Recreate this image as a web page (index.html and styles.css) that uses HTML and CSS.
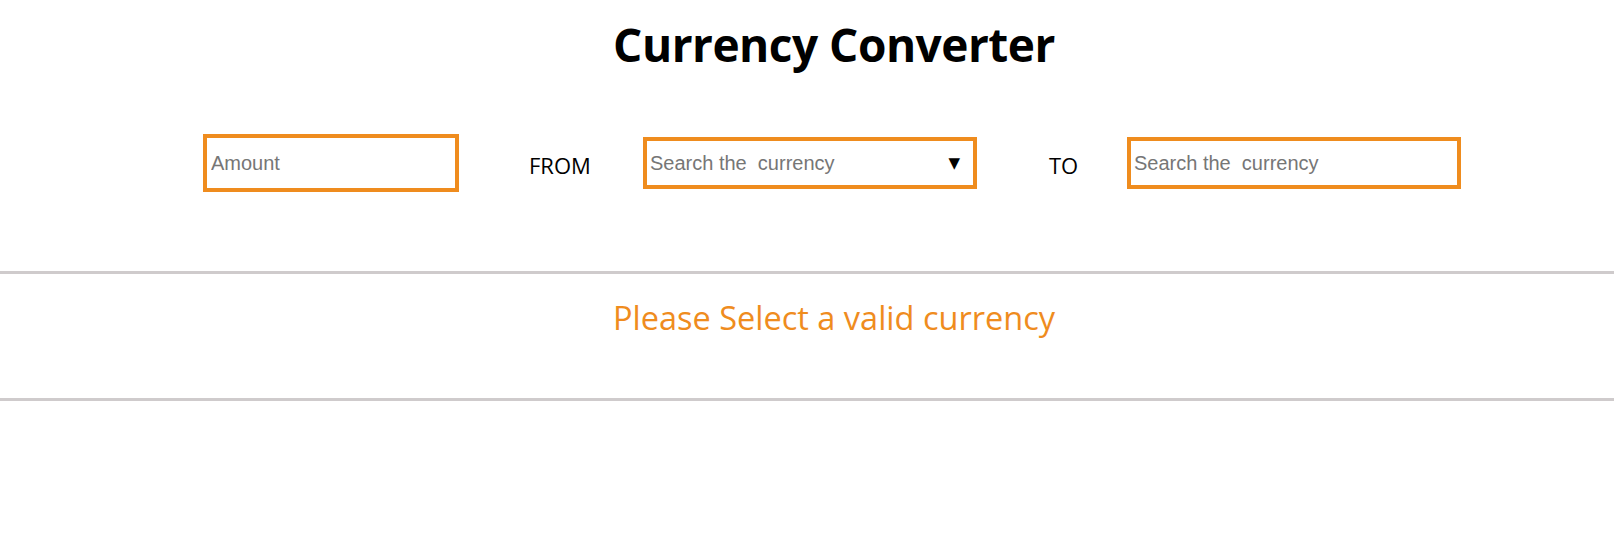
FILE: index.html
```html
<!DOCTYPE html>
<html lang="en">
<head>
<meta charset="utf-8">
<title>Currency Converter</title>
<link rel="stylesheet" href="styles.css">
</head>
<body>
<div class="page">
  <h1 class="title">Currency Converter</h1>
  <div class="row">
    <input class="field amount" type="text" placeholder="Amount">
    <span class="label from">FROM</span>
    <div class="combo">
      <input class="combo-input" type="text" placeholder="Search the  currency">
      <span class="arrow">▼</span>
    </div>
    <span class="label to">TO</span>
    <input class="field search" type="text" placeholder="Search the  currency">
  </div>
</div>
<div class="result">
  <p class="message">Please Select a valid currency</p>
</div>
</body>
</html>
```
FILE: styles.css
```css
* { box-sizing: border-box; }
body {
  margin: 0;
  background: #fff;
  font-family: "Open Sans", "Noto Sans", sans-serif;
  color: #000;
}
.page {
  padding-left: 54px;
}
.title {
  margin: 0;
  padding-top: 14px;
  text-align: center;
  font-size: 46px;
  line-height: 60px;
  font-weight: 700;
  letter-spacing: -0.5px;
}
.row {
  display: flex;
  align-items: center;
  margin-top: 59px;
  margin-left: 149px;
  height: 60px;
}
.field, .combo {
  border: 4px solid #ef8c1e;
  background: #fff;
}
.field {
  font-family: "Liberation Sans", Arial, sans-serif;
  font-size: 20px;
  color: #000;
  padding: 0 4px;
  outline: none;
}
.field::placeholder, .combo-input::placeholder {
  color: #767676;
}
.amount {
  width: 256px;
  height: 58px;
}
.search {
  width: 334px;
  height: 52px;
  padding-left: 3px;
}
.label {
  font-size: 22px;
  line-height: 30px;
  margin-top: 3px;
  flex: none;
  white-space: nowrap;
}
.from {
  width: 64px;
  margin-left: 70px;
  margin-right: 50px;
}
.to {
  width: 29px;
  margin-left: 72px;
  margin-right: 49px;
}
.combo {
  width: 334px;
  height: 52px;
  display: flex;
  align-items: center;
  padding: 0 13px 0 3px;
}
.combo-input {
  flex: 1;
  border: none;
  outline: none;
  font-family: "Liberation Sans", Arial, sans-serif;
  font-size: 20px;
  padding: 0;
  min-width: 0;
  background: transparent;
}
.arrow {
  font-family: "DejaVu Sans", sans-serif;
  font-size: 15px;
  color: #000;
}
.result {
  margin-top: 78px;
  border-top: 3px solid #cfcbcc;
  border-bottom: 3px solid #cfcbcc;
  height: 130px;
  padding-left: 54px;
}
.message {
  margin: 0;
  padding-top: 22px;
  text-align: center;
  font-size: 32.5px;
  line-height: 44px;
  color: #ef8c1e;
}
```
